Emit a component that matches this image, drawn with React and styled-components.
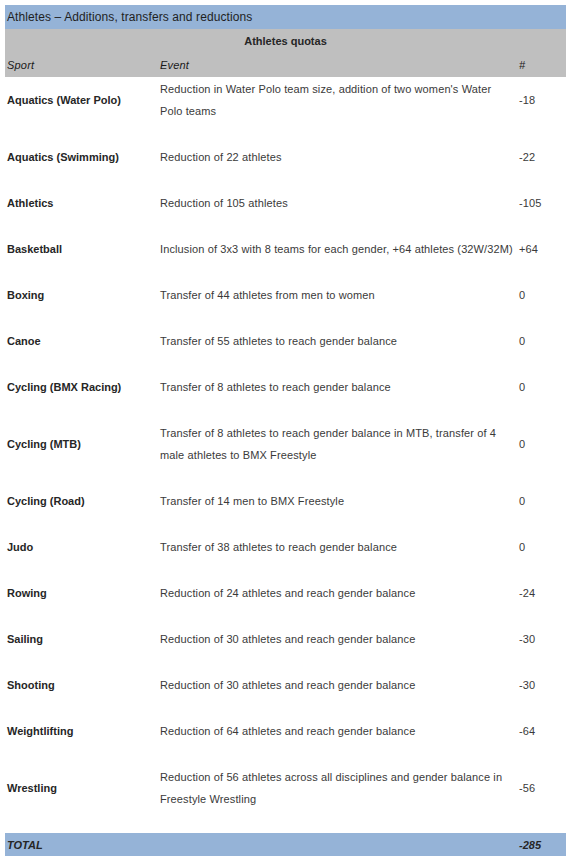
import styled, { createGlobalStyle } from "styled-components";

const GlobalStyle = createGlobalStyle`
  body {
    margin: 0;
    background: #ffffff;
    font-family: "Liberation Sans", Arial, sans-serif;
  }
`;

const Table = styled.div`
  width: 561px;
  margin: 5px 0 0 5px;
  font-size: 11px;
  color: #333333;
`;

const TitleBar = styled.div`
  height: 24px;
  line-height: 24px;
  background-color: #95b3d7;
  padding-left: 2px;
  font-size: 12px;
  letter-spacing: 0.1px;
  color: #1f1f1f;
`;

const Grid = styled.div`
  display: grid;
  grid-template-columns: 148px 365px 48px;
  align-items: center;
`;

const HeadBlock = styled.div`
  background-color: #bfbfbf;
  color: #262626;
`;

const QuotaCaption = styled.div`
  height: 24px;
  line-height: 24px;
  text-align: center;
  font-weight: bold;
`;

const HeadRow = styled(Grid)`
  height: 24px;
  font-style: italic;
  color: #1a1a1a;
  letter-spacing: 0.2px;
`;

const Row = styled(Grid)`
  padding: 1px 0 23px;
  line-height: 22px;
`;

const Cell = styled.div`
  padding: 0 ${(p) => p.$right || 0}px 0 ${(p) => p.$pad || 0}px;
  font-weight: ${(p) => (p.$bold ? "bold" : "normal")};
  color: ${(p) => (p.$bold ? "#262626" : "#3a3a3a")};
  letter-spacing: ${(p) => (p.$bold ? "0" : "0.12px")};
`;

const HeadCell = styled.div`
  padding-left: ${(p) => p.$pad || 0}px;
`;

const TotalBar = styled(Grid)`
  height: 23px;
  background-color: #95b3d7;
  font-style: italic;
  font-weight: bold;
  color: #1f2a3a;
`;

const rows = [
  ["Aquatics (Water Polo)", "Reduction in Water Polo team size, addition of two women's Water Polo teams", "-18"],
  ["Aquatics (Swimming)", "Reduction of 22 athletes", "-22"],
  ["Athletics", "Reduction of 105 athletes", "-105"],
  ["Basketball", "Inclusion of 3x3 with 8 teams for each gender, +64 athletes (32W/32M)", "+64"],
  ["Boxing", "Transfer of 44 athletes from men to women", "0"],
  ["Canoe", "Transfer of 55 athletes to reach gender balance", "0"],
  ["Cycling (BMX Racing)", "Transfer of 8 athletes to reach gender balance", "0"],
  ["Cycling (MTB)", "Transfer of 8 athletes to reach gender balance in MTB, transfer of 4 male athletes to BMX Freestyle", "0"],
  ["Cycling (Road)", "Transfer of 14 men to BMX Freestyle", "0"],
  ["Judo", "Transfer of 38 athletes to reach gender balance", "0"],
  ["Rowing", "Reduction of 24 athletes and reach gender balance", "-24"],
  ["Sailing", "Reduction of 30 athletes and reach gender balance", "-30"],
  ["Shooting", "Reduction of 30 athletes and reach gender balance", "-30"],
  ["Weightlifting", "Reduction of 64 athletes and reach gender balance", "-64"],
  ["Wrestling", "Reduction of 56 athletes across all disciplines and gender balance in Freestyle Wrestling", "-56"],
];

const App = () => {
  return (
    <>
      <GlobalStyle />
      <Table>
        <TitleBar>Athletes – Additions, transfers and reductions</TitleBar>
        <HeadBlock>
          <QuotaCaption>Athletes quotas</QuotaCaption>
          <HeadRow>
            <HeadCell $pad={2}>Sport</HeadCell>
            <HeadCell $pad={7}>Event</HeadCell>
            <HeadCell $pad={1}>#</HeadCell>
          </HeadRow>
        </HeadBlock>
        {rows.map(([sport, event, count]) => (
          <Row key={sport}>
            <Cell $pad={2} $bold>{sport}</Cell>
            <Cell $pad={7} $right={3}>{event}</Cell>
            <Cell $pad={1}>{count}</Cell>
          </Row>
        ))}
        <TotalBar>
          <Cell $pad={2} $bold>TOTAL</Cell>
          <div />
          <Cell $pad={1} $bold>-285</Cell>
        </TotalBar>
      </Table>
    </>
  );
};

export default App;
